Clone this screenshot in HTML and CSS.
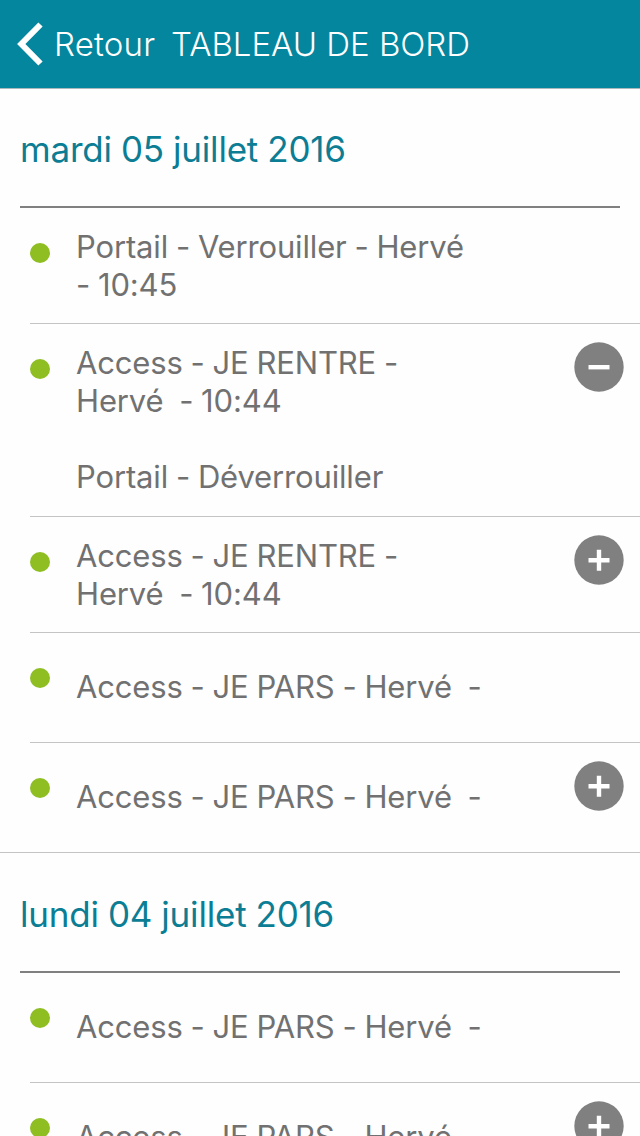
FILE: index.html
```html
<!DOCTYPE html>
<html lang="fr">
<head>
    <meta charset="UTF-8">
    <meta name="viewport" content="width=device-width, initial-scale=1.0">
    <title>Tableau de bord</title>
    <link rel="stylesheet" href="styles.css">
</head>
<body>
    <header class="navbar">
        <a class="back" href="#">
            <svg class="back-icon" width="26" height="44" viewBox="0 0 26 44"><path d="M23.5 2.5 L4.3 22 L23.5 41.5" fill="none" stroke="#fff" stroke-width="6"/></svg>
            <span class="back-label">Retour</span>
        </a>
        <h1 class="page-title">TABLEAU DE BORD</h1>
    </header>

    <section class="day">
        <h2 class="day-title">mardi 05 juillet 2016</h2>
        <ul class="events">
            <li class="event">
                <span class="dot"></span>
                <div class="event-body">
                    <p class="event-text">Portail - Verrouiller - Hervé<br>- 10:45</p>
                </div>
            </li>
            <li class="event">
                <span class="dot"></span>
                <div class="event-body">
                    <p class="event-text">Access - JE RENTRE -<br>Hervé&nbsp; - 10:44</p>
                    <p class="event-text event-detail">Portail - Déverrouiller</p>
                </div>
                <button class="toggle" aria-label="Réduire">
                    <svg width="50" height="50" viewBox="0 0 50 50"><circle cx="25" cy="25" r="24.7" fill="#808080"/><path d="M14.5 25.2 H35.5" stroke="#fff" stroke-width="4.4"/></svg>
                </button>
            </li>
            <li class="event">
                <span class="dot"></span>
                <div class="event-body">
                    <p class="event-text">Access - JE RENTRE -<br>Hervé&nbsp; - 10:44</p>
                </div>
                <button class="toggle" aria-label="Développer">
                    <svg width="50" height="50" viewBox="0 0 50 50"><circle cx="25" cy="25" r="24.7" fill="#808080"/><path d="M14.5 25.2 H35.5 M25 14.7 V35.7" stroke="#fff" stroke-width="4.4"/></svg>
                </button>
            </li>
            <li class="event event-single">
                <span class="dot"></span>
                <div class="event-body">
                    <p class="event-text">Access - JE PARS - Hervé&nbsp; -</p>
                </div>
            </li>
            <li class="event event-single">
                <span class="dot"></span>
                <div class="event-body">
                    <p class="event-text">Access - JE PARS - Hervé&nbsp; -</p>
                </div>
                <button class="toggle" aria-label="Développer">
                    <svg width="50" height="50" viewBox="0 0 50 50"><circle cx="25" cy="25" r="24.7" fill="#808080"/><path d="M14.5 25.2 H35.5 M25 14.7 V35.7" stroke="#fff" stroke-width="4.4"/></svg>
                </button>
            </li>
        </ul>
    </section>

    <section class="day">
        <h2 class="day-title">lundi 04 juillet 2016</h2>
        <ul class="events">
            <li class="event event-single">
                <span class="dot"></span>
                <div class="event-body">
                    <p class="event-text">Access - JE PARS - Hervé&nbsp; -</p>
                </div>
            </li>
            <li class="event event-single">
                <span class="dot"></span>
                <div class="event-body">
                    <p class="event-text">Access - JE PARS - Hervé&nbsp; -</p>
                </div>
                <button class="toggle" aria-label="Développer">
                    <svg width="50" height="50" viewBox="0 0 50 50"><circle cx="25" cy="25" r="24.7" fill="#808080"/><path d="M14.5 25.2 H35.5 M25 14.7 V35.7" stroke="#fff" stroke-width="4.4"/></svg>
                </button>
            </li>
        </ul>
    </section>
</body>
</html>
```
FILE: styles.css
```css
* {
    margin: 0;
    padding: 0;
    box-sizing: border-box;
}

body {
    font-family: Inter, "Liberation Sans", sans-serif;
    background: #fefefe;
    color: #717171;
    height: 1136px;
    overflow: hidden;
}

.navbar {
    display: flex;
    align-items: center;
    height: 89px;
    padding-left: 17px;
    background: #04869e;
    border-bottom: 1px solid #a9b9bc;
    color: white;
}

.back {
    display: flex;
    align-items: center;
    width: 154px;
    color: white;
    text-decoration: none;
}

.back-icon {
    margin-right: 11px;
}

.back-label,
.page-title {
    font-size: 33px;
    font-weight: 300;
    line-height: 40px;
    white-space: nowrap;
}

.back-label {
    letter-spacing: 0.2px;
}

.day-title {
    height: 119px;
    margin: 0 20px;
    padding-top: 39px;
    border-bottom: 2px solid #808080;
    color: #0b7d94;
    font-size: 35px;
    font-weight: 400;
    line-height: 42px;
    letter-spacing: -0.2px;
    word-spacing: -0.5px;
    white-space: nowrap;
}

.events {
    margin-bottom: 1px;
    list-style: none;
}

.event {
    display: flex;
    align-items: flex-start;
    margin-left: 30px;
    padding: 19px 16px 19px 0;
    border-bottom: 1px solid #c4c4c4;
}

.event:last-child {
    margin-left: 0;
    padding-left: 30px;
}

.event-single {
    height: 110px;
}

.event-single .event-text {
    padding-top: 15px;
}

.dot {
    width: 20px;
    height: 20px;
    margin: 16px 26px 0 0;
    border-radius: 50%;
    background: #8ebe22;
}

.event-body {
    flex: 1;
    padding-top: 1px;
}

.event-text {
    font-size: 31px;
    line-height: 38px;
    letter-spacing: -0.15px;
    word-spacing: -0.7px;
    white-space: nowrap;
}

.event-detail {
    margin-top: 38px;
    padding-bottom: 1px;
}

.toggle {
    height: 50px;
    margin-top: -1px;
    border: none;
    background: none;
    cursor: pointer;
}

.toggle svg {
    display: block;
}
```
